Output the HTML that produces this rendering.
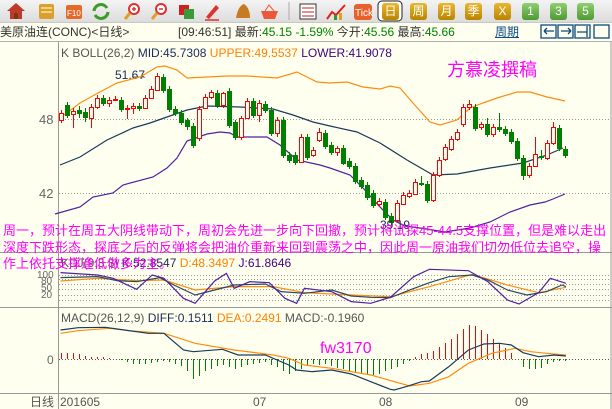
<!DOCTYPE html>
<html><head><meta charset="utf-8"><style>
*{margin:0;padding:0}
body{width:612px;height:409px;overflow:hidden;background:#fffff0;font-family:"Liberation Sans","Noto Sans CJK SC",sans-serif;position:relative}
#tb{position:absolute;left:0;top:0;width:612px;height:22px;background:linear-gradient(#f4f4f4,#dcdcdc);border-bottom:1px solid #c8c8c8}
.b{position:absolute;top:3px;width:17px;height:17px;border-radius:3px;color:#fff;font-size:12px;line-height:17px;text-align:center}
.g{background:linear-gradient(#e8b830,#b98400)}
.gr{background:linear-gradient(#8fcf70,#4e9a32)}
#tr{position:absolute;left:0;top:23px;width:612px;height:18px;background:#fffff0;border-bottom:1px solid #b0b0b0;font-size:12px;line-height:18px;color:#333;white-space:nowrap}
.mag{color:#ff00ff}
</style></head><body>
<div id="tb">
<svg width="612" height="22" style="position:absolute;left:0;top:0">
<path d="M7 11 L16 3 L25 11 L22 11 L22 19 L10 19 L10 11Z" fill="#c0392b"/><rect x="14" y="13" width="4" height="6" fill="#7a3b10"/>
<rect x="39" y="4" width="15" height="15" rx="2" fill="#d9a030"/><rect x="41" y="7" width="11" height="2" fill="#f4d27a"/><rect x="41" y="11" width="11" height="2" fill="#f4d27a"/>
<rect x="66" y="5" width="16" height="14" rx="2" fill="#e46a2a"/><text x="67" y="16" font-size="8" fill="#fff" font-family="Liberation Sans">F10</text>
<path d="M94 11 A7 7 0 0 1 107 8" stroke="#3a9a2a" stroke-width="3" fill="none"/><path d="M108 12 A7 7 0 0 1 95 15" stroke="#3a9a2a" stroke-width="3" fill="none"/>
<circle cx="134" cy="9" r="5" fill="#fff" stroke="#e03030" stroke-width="2"/><path d="M130 13 L125 19" stroke="#e0a020" stroke-width="3"/><path d="M132 9h4M134 7v4" stroke="#e03030" stroke-width="1.5"/>
<circle cx="161" cy="9" r="5" fill="#fff" stroke="#e03030" stroke-width="2"/><path d="M157 13 L152 19" stroke="#e0a020" stroke-width="3"/><path d="M159 9h4" stroke="#e03030" stroke-width="1.5"/>
<rect x="179" y="5" width="10" height="10" fill="#d02020"/><rect x="184" y="9" width="10" height="10" fill="#3a9a3a"/>
<path d="M206 17 L216 5 L219 8 L209 19Z" fill="#e03030"/><path d="M205 20h14" stroke="#e03030" stroke-width="1.5"/>
<path d="M236 18 Q238 6 244 4 Q250 8 250 18Z" fill="#c87a20"/>
<path d="M261 11h17l-3 8h-11z" fill="#e85a3a"/><path d="M265 11 L269 5 L274 11" stroke="#e85a3a" fill="none"/>
<line x1="289" y1="2" x2="289" y2="20" stroke="#aaa"/>
<rect x="300" y="4" width="16" height="15" fill="#fff" stroke="#333"/><path d="M302 8h12M302 12h12M302 16h12" stroke="#c02020"/>
<path d="M327 19 L332 12 L336 15 L345 5" stroke="#e02020" stroke-width="2" fill="none"/><rect x="334" y="15" width="3" height="5" fill="#2a9a2a"/><rect x="339" y="13" width="3" height="7" fill="#e0a020"/>
<rect x="354" y="4" width="18" height="16" rx="3" fill="#e8602a"/><text x="355" y="16" font-size="10" fill="#fff" font-family="Liberation Sans">Tick</text>
<rect x="378" y="1" width="24" height="20" rx="4" fill="#fff" stroke="#222"/>
</svg>
<div class="b g" style="left:382px">日</div>
<div class="b g" style="left:410px">周</div>
<div class="b g" style="left:438px">月</div>
<div class="b g" style="left:465px">季</div>
<div class="b g" style="left:494px">X</div>
<div class="b gr" style="left:522px">1</div>
<div class="b gr" style="left:550px">3</div>
<div class="b gr" style="left:577px">5</div>
</div>
<div id="tr"><span style="position:absolute;left:0">美原油连(CONC)&lt;日线&gt;</span><span style="position:absolute;left:178px">[09:46:51] 最新:<span style="color:#008000">45.15 -1.59%</span> 今开:<span style="color:#008000">45.56</span> 最高:<span style="color:#008000">45.66</span></span><span style="position:absolute;left:495px;color:#0a4a8a;text-decoration:underline">周期</span>
<svg width="72" height="16" style="position:absolute;left:540px;top:1px"><g fill="none" stroke="#0a4a7a" stroke-width="1.3"><rect x="1" y="1" width="15" height="13"/><rect x="18" y="1" width="15" height="13"/><rect x="35" y="1" width="15" height="13"/><rect x="54" y="1" width="15" height="13"/><path d="M4 7h10M4 7l3-3M4 7l3 3M21 7h10M31 7l-3-3M31 7l-3 3M37 8h10M47 2v11"/></g></svg></div>
<svg width="612" height="409" style="position:absolute;left:0;top:0" font-family="Liberation Sans" font-size="12">
<line x1="58.5" y1="42" x2="58.5" y2="409" stroke="#999"/>
<line x1="611" y1="42" x2="611" y2="409" stroke="#999"/>
<line x1="0" y1="252.5" x2="612" y2="252.5" stroke="#999"/>
<line x1="0" y1="307.5" x2="612" y2="307.5" stroke="#999"/>
<line x1="0" y1="393.5" x2="612" y2="393.5" stroke="#999"/>
<g stroke="#999" stroke-dasharray="1,2"><line x1="59" y1="119.5" x2="611" y2="119.5"/><line x1="59" y1="193.5" x2="611" y2="193.5"/>
<line x1="59" y1="275.5" x2="611" y2="275.5"/><line x1="59" y1="279.5" x2="611" y2="279.5"/><line x1="59" y1="284.5" x2="611" y2="284.5"/><line x1="59" y1="289.5" x2="611" y2="289.5"/><line x1="59" y1="295.5" x2="611" y2="295.5"/><line x1="59" y1="300.5" x2="611" y2="300.5"/>
<line x1="59" y1="359.5" x2="611" y2="359.5" stroke="#555"/></g>
<text x="39" y="124" fill="#666" font-size="13">48</text><text x="39" y="198" fill="#666" font-size="13">42</text>
<text x="37" y="278" fill="#666" font-size="10">100</text><text x="41" y="284" fill="#666" font-size="10">80</text><text x="41" y="291" fill="#666" font-size="10">50</text><text x="41" y="298" fill="#666" font-size="10">20</text>
<text x="47" y="364" fill="#666">0</text>
<text x="61" y="57" fill="#555">K  BOLL(26,2) <tspan fill="#1a2a5a">MID:45.7308</tspan> <tspan fill="#ff8000">UPPER:49.5537</tspan> <tspan fill="#400080">LOWER:41.9078</tspan></text>
<text x="447" y="76" fill="#ff00ff" font-size="18" font-family="Liberation Sans,Noto Sans CJK SC,sans-serif">方慕凌撰稿</text>
<text x="115" y="79" fill="#1a2a5a">51.67</text><path d="M132 77h12l-3-2" stroke="#555" fill="none"/>
<g fill="none" stroke-width="1.2">
<polyline stroke="#ff8c10" points="60,118 80,103 98,93 117,83 140,77 157,67 165,66 177,70 187,78 207,77 227,76 247,76 277,78 297,72 317,82 330,83 347,82 363,87 380,89 390,86 400,88 413,103 430,122 440,125 457,120 470,108 483,103 497,98 517,92 530,92 547,97 565,101"/>
<polyline stroke="#1a3a5a" points="60,165 80,157 107,140 133,128 150,123 167,117 187,110 207,106 240,107 273,109 293,115 313,122 330,126 357,132 380,143 407,160 433,175 457,174 490,168 523,163 547,155 563,148"/>
<polyline stroke="#5020a0" points="55,214 80,207 93,197 113,193 123,185 153,177 167,168 177,158 187,141 207,134 220,132 230,133 237,137 267,137 280,145 297,160 320,165 330,168 350,175 363,188 380,207 393,220 405,226 420,228 445,232 470,228 490,222 510,212 530,205 545,202 553,199 565,194"/>
</g>
<g id="c" stroke-width="1">
<g stroke="#ff0000" fill="#fffff0">
<path d="M61.5 110v13M73.5 108v20M91.5 104v24M97.5 95v14M109.5 97v10M115.5 96v5M127.5 105v14M133.5 103v11M145.5 95v12M151.5 86v12M157.5 73v17M199.5 106v35M205.5 94v15M211.5 90v9M223.5 92v16M241.5 116v24M247.5 98v21M259.5 100v22M277.5 117v20M301.5 134v27M313.5 147v10M319.5 128v14M337.5 146v10M379.5 198v9M397.5 200v22M403.5 192v12M409.5 190v8M415.5 179v16M433.5 172v30M439.5 157v20M445.5 144v17M451.5 136v15M457.5 129v12M463.5 104v23M469.5 100v10M481.5 122v8M493.5 124v13M529.5 163v15M535.5 137v30M547.5 140v20M553.5 122v23"/>
<rect x="59.5" y="113.5" width="4" height="7"/><rect x="71.5" y="111.5" width="4" height="3"/><rect x="89.5" y="107.5" width="4" height="11"/><rect x="95.5" y="98.5" width="4" height="9"/><rect x="107.5" y="100.5" width="4" height="3"/><rect x="113.5" y="99.5" width="4" height="1"/><rect x="125.5" y="108.5" width="4" height="1"/><rect x="131.5" y="106.5" width="4" height="2"/><rect x="143.5" y="98.5" width="4" height="10"/><rect x="149.5" y="89.5" width="4" height="9"/><rect x="155.5" y="76.5" width="4" height="14"/><rect x="197.5" y="109.5" width="4" height="29"/><rect x="203.5" y="97.5" width="4" height="11"/><rect x="209.5" y="92.5" width="4" height="5"/><rect x="221.5" y="93.5" width="4" height="12"/><rect x="239.5" y="118.5" width="4" height="19"/><rect x="245.5" y="101.5" width="4" height="17"/><rect x="257.5" y="103.5" width="4" height="12"/><rect x="275.5" y="120.5" width="4" height="13"/><rect x="299.5" y="137.5" width="4" height="25"/><rect x="311.5" y="150.5" width="4" height="5"/><rect x="317.5" y="132.5" width="4" height="8"/><rect x="335.5" y="148.5" width="4" height="4"/><rect x="377.5" y="201.5" width="4" height="3"/><rect x="395.5" y="203.5" width="4" height="17"/><rect x="401.5" y="195.5" width="4" height="9"/><rect x="407.5" y="193.5" width="4" height="3"/><rect x="413.5" y="182.5" width="4" height="12"/><rect x="431.5" y="175.5" width="4" height="25"/><rect x="437.5" y="160.5" width="4" height="15"/><rect x="443.5" y="147.5" width="4" height="12"/><rect x="449.5" y="139.5" width="4" height="10"/><rect x="455.5" y="132.5" width="4" height="7"/><rect x="461.5" y="107.5" width="4" height="17"/><rect x="467.5" y="104.5" width="4" height="3"/><rect x="479.5" y="124.5" width="4" height="3"/><rect x="491.5" y="127.5" width="4" height="7"/><rect x="527.5" y="166.5" width="4" height="9"/><rect x="533.5" y="154.5" width="4" height="12"/><rect x="545.5" y="143.5" width="4" height="15"/><rect x="551.5" y="127.5" width="4" height="16"/>
</g>
<g stroke="#008000" fill="#008000">
<path d="M67.5 102v16M79.5 106v12M85.5 108v14M103.5 95v11M121.5 97v15M139.5 103v8M163.5 74v19M169.5 86v26M175.5 106v10M181.5 110v15M187.5 118v12M193.5 123v25M217.5 90v18M229.5 88v40M235.5 120v20M253.5 98v20M265.5 101v12M271.5 107v29M283.5 117v41M289.5 152v11M295.5 152v13M307.5 134v26M325.5 130v19M331.5 142v13M343.5 145v20M349.5 158v11M355.5 163v21M361.5 177v12M367.5 182v18M373.5 190v18M385.5 199v21M391.5 213v13M421.5 176v10M427.5 181v22M475.5 104v27M487.5 118v19M499.5 113v19M505.5 126v10M511.5 129v15M517.5 138v23M523.5 155v25M541.5 150v10M559.5 125v26M565.5 146v12"/>
<rect x="65.5" y="105.5" width="4" height="10"/><rect x="77.5" y="110.5" width="4" height="3"/><rect x="83.5" y="112.5" width="4" height="5"/><rect x="101.5" y="98.5" width="4" height="5"/><rect x="119.5" y="100.5" width="4" height="9"/><rect x="137.5" y="106.5" width="4" height="2"/><rect x="161.5" y="77.5" width="4" height="13"/><rect x="167.5" y="89.5" width="4" height="20"/><rect x="173.5" y="109.5" width="4" height="4"/><rect x="179.5" y="113.5" width="4" height="9"/><rect x="185.5" y="120.5" width="4" height="6"/><rect x="191.5" y="126.5" width="4" height="19"/><rect x="215.5" y="93.5" width="4" height="12"/><rect x="227.5" y="91.5" width="4" height="34"/><rect x="233.5" y="122.5" width="4" height="15"/><rect x="251.5" y="101.5" width="4" height="14"/><rect x="263.5" y="104.5" width="4" height="6"/><rect x="269.5" y="110.5" width="4" height="23"/><rect x="281.5" y="120.5" width="4" height="35"/><rect x="287.5" y="155.5" width="4" height="5"/><rect x="293.5" y="155.5" width="4" height="7"/><rect x="305.5" y="137.5" width="4" height="20"/><rect x="323.5" y="133.5" width="4" height="13"/><rect x="329.5" y="145.5" width="4" height="7"/><rect x="341.5" y="148.5" width="4" height="15"/><rect x="347.5" y="161.5" width="4" height="5"/><rect x="353.5" y="166.5" width="4" height="15"/><rect x="359.5" y="180.5" width="4" height="6"/><rect x="365.5" y="185.5" width="4" height="12"/><rect x="371.5" y="193.5" width="4" height="12"/><rect x="383.5" y="202.5" width="4" height="15"/><rect x="389.5" y="216.5" width="4" height="6"/><rect x="419.5" y="183.5" width="4" height="1"/><rect x="425.5" y="184.5" width="4" height="16"/><rect x="473.5" y="107.5" width="4" height="21"/><rect x="485.5" y="124.5" width="4" height="10"/><rect x="497.5" y="127.5" width="4" height="2"/><rect x="503.5" y="129.5" width="4" height="4"/><rect x="509.5" y="132.5" width="4" height="9"/><rect x="515.5" y="141.5" width="4" height="17"/><rect x="521.5" y="158.5" width="4" height="17"/><rect x="539.5" y="156.5" width="4" height="1"/><rect x="557.5" y="128.5" width="4" height="20"/><rect x="563.5" y="149.5" width="4" height="6"/>
</g></g>
<text x="380" y="229" fill="#1a2a5a">39.19</text>
<!-- KDJ -->
<text x="61" y="267" fill="#555">KDJ(9,3,3) <tspan fill="#1a2a5a">K:52.8547</tspan> <tspan fill="#ff8000">D:48.3497</tspan> <tspan fill="#400080">J:61.8646</tspan></text>
<g transform="matrix(0.3903,0,0,0.3333,0,210)" fill="none" stroke-width="1.2">
<polyline vector-effect="non-scaling-stroke" stroke="#ff8c10" points="155,213 250,205 350,212 420,210 500,240 600,230 700,230 780,248 900,255 1000,260 1100,230 1210,193 1300,225 1380,248 1450,232"/>
<polyline vector-effect="non-scaling-stroke" stroke="#2a4a5a" points="155,203 250,200 300,212 350,215 410,203 440,222 500,255 550,240 600,225 680,222 720,245 780,250 850,240 900,258 950,262 1000,263 1050,240 1100,218 1150,200 1210,195 1250,210 1300,240 1350,255 1400,245 1440,225 1450,230"/>
<polyline vector-effect="non-scaling-stroke" stroke="#5020a0" points="155,188 250,195 290,205 350,238 390,195 420,205 470,265 500,280 550,213 580,190 600,235 640,215 690,218 730,265 760,280 780,235 850,245 900,275 950,280 1000,262 1060,200 1100,178 1200,182 1250,215 1300,270 1330,282 1380,248 1410,205 1450,220"/>
</g>
<!-- MACD -->
<text x="61" y="322" fill="#555">MACD(26,12,9) <tspan fill="#1a2a5a">DIFF:0.1511</tspan> <tspan fill="#ff8000">DEA:0.2491</tspan> <tspan fill="#555">MACD:-0.1960</tspan></text>
<g stroke-width="1">
<g stroke="#ff0000"><path d="M61.5 359v-6M67.5 359v-6M73.5 359v-6M79.5 359v-5M85.5 359v-3M91.5 359v-2M97.5 359v-2M103.5 359v-2M109.5 359v-1M415.5 359v-2M421.5 359v-5M427.5 359v-6M433.5 359v-8M439.5 359v-12M445.5 359v-16M451.5 359v-20M457.5 359v-25M463.5 359v-30M469.5 359v-34M475.5 359v-33M481.5 359v-29M487.5 359v-25M493.5 359v-20M499.5 359v-16M505.5 359v-11M511.5 359v-6"/></g>
<g stroke="#008000"><path d="M121.5 359v1M127.5 359v3M133.5 359v5M139.5 359v5M145.5 359v5M151.5 359v4M157.5 359v3M163.5 359v2M169.5 359v3M175.5 359v5M181.5 359v7M187.5 359v12M193.5 359v20M199.5 359v17M205.5 359v12M211.5 359v10M217.5 359v7M223.5 359v6M229.5 359v8M235.5 359v10M241.5 359v8M247.5 359v6M253.5 359v5M259.5 359v4M265.5 359v3M271.5 359v6M277.5 359v8M283.5 359v12M289.5 359v15M295.5 359v12M301.5 359v10M307.5 359v7M313.5 359v5M319.5 359v6M325.5 359v5M331.5 359v7M337.5 359v9M343.5 359v10M349.5 359v12M355.5 359v14M361.5 359v15M367.5 359v15M373.5 359v16M379.5 359v15M385.5 359v12M391.5 359v10M397.5 359v8M403.5 359v5M409.5 359v2M523.5 359v8M529.5 359v10M535.5 359v10M541.5 359v9M547.5 359v5M553.5 359v3M559.5 359v2M565.5 359v2"/></g>
</g>
<g transform="matrix(0.3903,0,0,0.3333,0,300)" fill="none" stroke-width="1.2">
<polyline vector-effect="non-scaling-stroke" stroke="#ff8c10" points="155,100 200,92 280,85 330,92 420,100 500,130 600,150 700,165 740,175 780,195 850,205 950,225 1050,258 1100,250 1150,230 1200,190 1260,160 1320,145 1360,155 1400,160 1450,165"/>
<polyline vector-effect="non-scaling-stroke" stroke="#1a3a5a" points="155,90 200,83 270,82 380,100 420,100 470,150 495,155 570,148 610,165 680,165 740,195 760,210 800,215 850,210 900,222 950,245 1000,268 1010,270 1040,260 1080,245 1100,243 1150,200 1200,150 1240,132 1280,130 1310,135 1340,158 1380,170 1420,165 1450,168"/>
</g>
<text x="320" y="353" fill="#ff00ff" font-size="16">fw3170</text>
<text x="30" y="406" fill="#555" font-family="Liberation Sans,Noto Sans CJK SC,sans-serif">日线</text>
<text x="60" y="406" fill="#555">201605</text><text x="253" y="406" fill="#555">07</text><text x="379" y="406" fill="#555">08</text><text x="515" y="406" fill="#555">09</text>
</svg>
<div class="mag" style="position:absolute;left:3px;top:223px;width:608px;font-size:13px;line-height:16.5px;font-family:'Liberation Sans','Noto Sans CJK SC',sans-serif;white-space:nowrap">周一，预计在周五大阴线带动下，周初会先进一步向下回撤，预计将试探45-44.5支撑位置，但是难以走出<br>深度下跌形态，探底之后的反弹将会把油价重新来回到震荡之中，因此周一原油我们切勿低位去追空，操<br>作上依托支撑逢低做多为主。</div>
</body></html>
